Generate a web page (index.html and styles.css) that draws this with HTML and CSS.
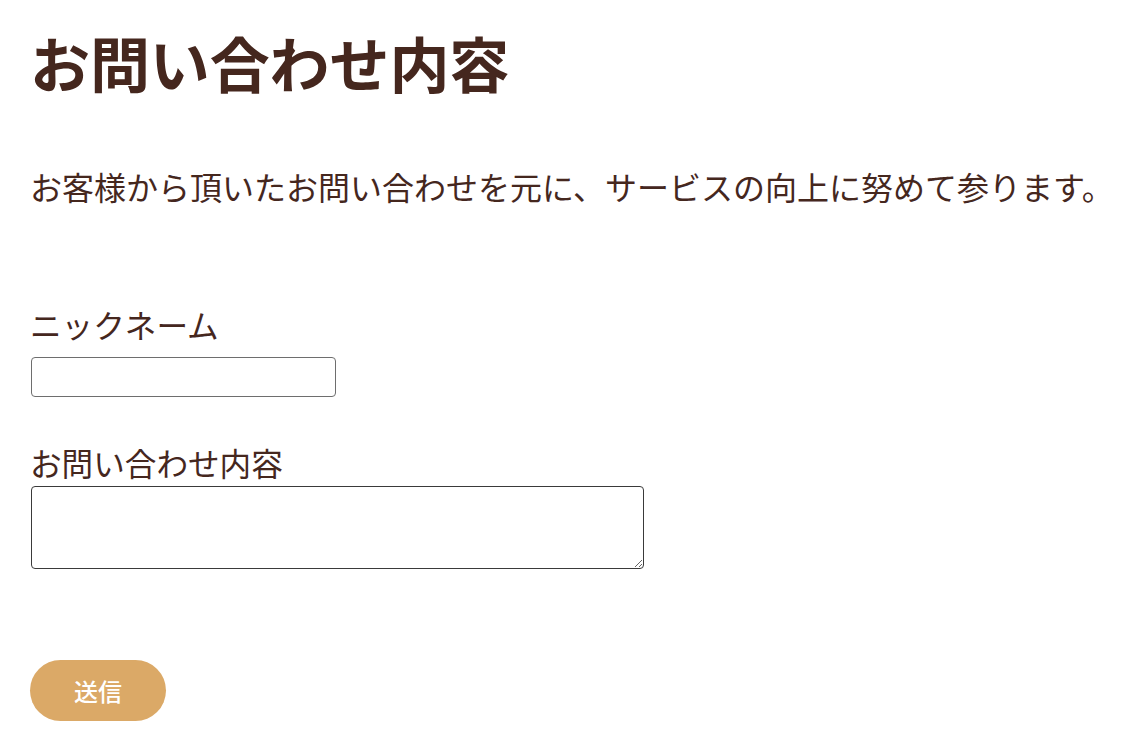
FILE: index.html
```html
<!DOCTYPE html>
<html lang="ja">
<head>
    <meta charset="UTF-8">
    <meta name="viewport" content="width=device-width, initial-scale=1.0">
    <title>お問い合わせ内容</title>
    <link rel="stylesheet" href="styles.css">
</head>
<body>
    <main class="contact">
        <h1 class="contact-title">お問い合わせ内容</h1>
        <p class="contact-lead">お客様から頂いたお問い合わせを元に、サービスの向上に努めて参ります。</p>

        <form class="contact-form">
            <div class="field">
                <label class="field-label" for="nickname">ニックネーム</label>
                <input class="field-input" type="text" id="nickname" name="nickname">
            </div>
            <div class="field field-message">
                <label class="field-label" for="message">お問い合わせ内容</label>
                <textarea class="field-textarea" id="message" name="message"></textarea>
            </div>
            <button class="submit-btn" type="submit">送信</button>
        </form>
    </main>
</body>
</html>
```

FILE: styles.css
```css
body {
    margin: 0;
    padding: 0;
    background-color: #fff;
    color: #45271e;
    font-family: "Noto Sans CJK JP", "Noto Sans", sans-serif;
}

.contact {
    padding: 17px 30px 0;
}

.contact-title {
    margin: 0;
    font-size: 60px;
    line-height: 90px;
    font-weight: 700;
    letter-spacing: -0.1px;
}

.contact-lead {
    margin: 56px 0 0;
    font-size: 32px;
    line-height: 47px;
    white-space: nowrap;
}

.contact-form {
    display: flex;
    flex-direction: column;
    align-items: flex-start;
    margin-top: 91px;
}

.field {
    display: flex;
    flex-direction: column;
    align-items: flex-start;
}

.field-label {
    font-size: 31.6px;
    line-height: 47px;
}

.field-input {
    box-sizing: border-box;
    width: 305px;
    height: 40px;
    margin: 9px 0 0 1px;
    border: 1px solid #6e6e6e;
    border-radius: 4px;
    font-size: 16px;
}

.field-message {
    margin-top: 42px;
}

.field-textarea {
    box-sizing: border-box;
    width: 613px;
    height: 83px;
    margin: 0 0 0 1px;
    border: 1px solid #3a3a3a;
    border-radius: 4px;
    font-size: 16px;
}

.submit-btn {
    margin-top: 91px;
    width: 136px;
    height: 61px;
    border: none;
    border-radius: 31px;
    background-color: #dba967;
    color: #fff;
    font-family: "Noto Sans CJK JP", sans-serif;
    font-size: 24px;
    font-weight: 500;
    cursor: pointer;
}
```
